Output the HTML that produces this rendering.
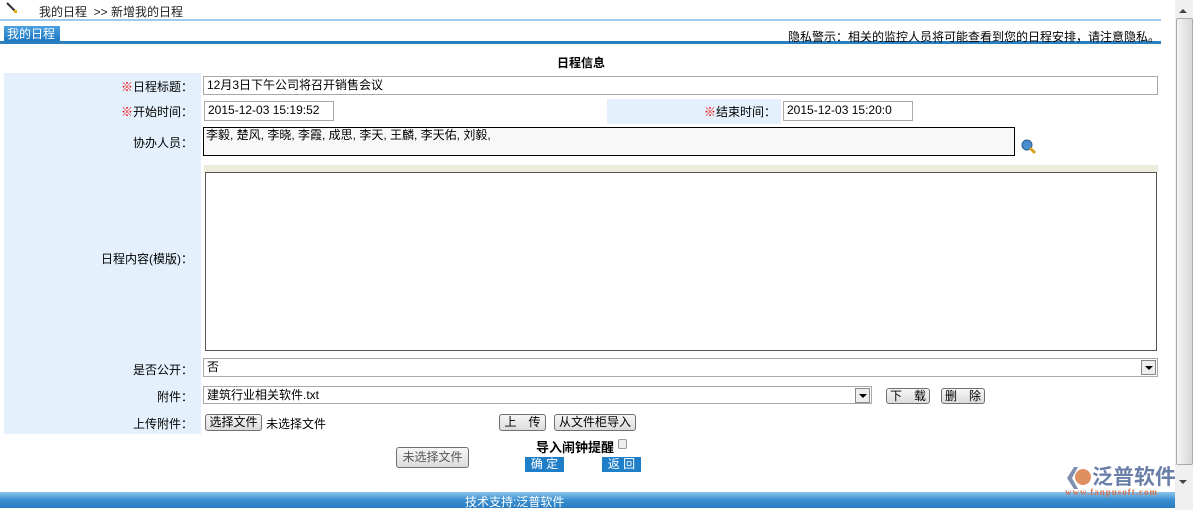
<!DOCTYPE html>
<html><head><meta charset="utf-8"><style>
body{margin:0;width:1193px;height:510px;position:relative;overflow:hidden;background:#fff;font-family:"Liberation Sans","Noto Sans CJK SC",sans-serif;font-size:12px;color:#000}
.a{position:absolute;white-space:nowrap}
.inp{position:absolute;border:1px solid #a9a9a9;background:#fff;box-sizing:border-box;padding:1px 3px;line-height:15px}
.btn{position:absolute;border:1px solid #707070;border-radius:3px;background:linear-gradient(#f6f6f6,#dcdcdc);box-sizing:border-box;text-align:center;line-height:14px;font-size:12px}
.lbl{position:absolute;right:1000px;text-align:right;white-space:nowrap}
.r{color:#e00}
.dd{position:absolute;width:15px;height:15px;border:1px solid #888;box-sizing:border-box;background:#eee}
.dd:after{content:"";position:absolute;left:3px;top:5px;border:4px solid transparent;border-top:4px solid #000}
.bb{position:absolute;background:#1e7ec8;color:#fff;text-align:center;line-height:15px;height:15px}
</style></head><body>
<div class="a" style="left:6px;top:2px;width:10px;height:10px;"><svg width="12" height="12"><path d="M1 1 L9 9" stroke="#333" stroke-width="2"/><rect x="8" y="8" width="3" height="3" fill="#e8b000"/></svg></div>
<div class="a" style="left:39px;top:3px;color:#222">我的日程 &nbsp;&gt;&gt; 新增我的日程</div>
<div class="a" style="left:0;top:19px;width:1161px;height:2px;background:#9fcaed"></div>
<div class="a" style="left:4px;top:26px;width:56px;height:16px;background:linear-gradient(#4aa0e0,#1a74c0);color:#fff;line-height:16px;padding-left:3px;box-sizing:border-box">我的日程</div>
<div class="a" style="left:0;top:41px;width:1161px;height:3px;background:#2a7fc0"></div>
<div class="a" style="left:788px;top:28px">隐私警示：相关的监控人员将可能查看到您的日程安排，请注意隐私。</div>
<div class="a" style="left:557px;top:54px;font-weight:bold">日程信息</div>
<div class="a" style="left:4px;top:73px;width:197px;height:361px;background:#e4f1fc"></div>
<div class="a" style="left:607px;top:99px;width:174px;height:25px;background:#e4f1fc"></div>
<div class="lbl" style="top:78px;right:1000px"><span class="r">※</span>日程标题：</div>
<div class="inp" style="left:203px;top:76px;width:955px;height:19px">12月3日下午公司将召开销售会议</div>
<div class="lbl" style="top:103px"><span class="r">※</span>开始时间：</div>
<div class="inp" style="left:204px;top:101px;width:130px;height:20px">2015-12-03 15:19:52</div>
<div class="a" style="left:704px;top:103px"><span class="r">※</span>结束时间：</div>
<div class="inp" style="left:783px;top:101px;width:130px;height:20px">2015-12-03 15:20:0</div>
<div class="lbl" style="top:134px">协办人员：</div>
<div class="inp" style="left:203px;top:127px;width:812px;height:29px;border:1px solid #000;background:#f8f8f8;padding:0 2px">李毅, 楚风, 李晓, 李霞, 成思, 李天, 王麟, 李天佑, 刘毅,</div>
<div class="a" style="left:1021px;top:139px"><svg width="16" height="16"><circle cx="6" cy="6" r="5" fill="#4a8ed0" stroke="#2a5e90"/><path d="M9 9 L14 14" stroke="#d8a020" stroke-width="3"/></svg></div>
<div class="a" style="left:204px;top:165px;width:954px;height:7px;background:#ecebdc"></div>
<div class="a" style="left:205px;top:172px;width:952px;height:179px;border:1px solid #555;box-sizing:border-box"></div>
<div class="lbl" style="top:250px">日程内容(模版)：</div>
<div class="lbl" style="top:361px">是否公开：</div>
<div class="inp" style="left:203px;top:358px;width:955px;height:19px">否</div>
<div class="dd" style="left:1141px;top:360px"></div>
<div class="lbl" style="top:388px">附件：</div>
<div class="inp" style="left:203px;top:386px;width:669px;height:18px">建筑行业相关软件.txt</div>
<div class="dd" style="left:855px;top:388px"></div>
<div class="btn" style="left:886px;top:388px;width:44px;height:16px">下　载</div>
<div class="btn" style="left:941px;top:388px;width:44px;height:16px">删　除</div>
<div class="lbl" style="top:415px">上传附件：</div>
<div class="btn" style="left:205px;top:414px;width:57px;height:17px">选择文件</div>
<div class="a" style="left:266px;top:415px">未选择文件</div>
<div class="btn" style="left:499px;top:414px;width:47px;height:17px">上　传</div>
<div class="btn" style="left:554px;top:414px;width:82px;height:17px">从文件柜导入</div>
<div class="a" style="left:536px;top:437px;font-weight:bold;font-size:13px">导入闹钟提醒</div>
<div class="a" style="left:618px;top:439px;width:7px;height:8px;border:1px solid #999;border-radius:2px;background:#eee"></div>
<div class="btn" style="left:396px;top:447px;width:73px;height:21px;line-height:19px;color:#555">未选择文件</div>
<div class="bb" style="left:525px;top:457px;width:39px">确 定</div>
<div class="bb" style="left:602px;top:457px;width:39px">返 回</div>
<div class="a" style="left:0;top:492px;width:1175px;height:16px;background:linear-gradient(#8cc4ec,#3a8fd0 50%,#2a7cc0)"></div>
<div class="a" style="left:465px;top:493px;color:#fff">技术支持:泛普软件</div>
<div class="a" style="left:1064px;top:465px"><svg width="30" height="26"><path d="M10 2 L3 13 L10 24 L14 24 L8 13 L14 2Z" fill="#8090b0"/><circle cx="19" cy="12" r="8" fill="#e09060"/></svg></div>
<div class="a" style="left:1092px;top:461px;font-size:21px;color:#6a7fa8;font-weight:bold">泛普软件</div>
<div class="a" style="left:1065px;top:487px;font-size:9px;color:#d07050;font-family:'Liberation Serif',serif;font-weight:bold;letter-spacing:1px">www.fanpusoft.com</div>
<div class="a" style="left:1175px;top:0;width:18px;height:510px;background:#f0f0f0"></div>
<div class="a" style="left:1176px;top:18px;width:15px;height:445px;background:linear-gradient(90deg,#f4f4f4,#d8d8d8);border:1px solid #aaa;border-radius:2px"></div>
<div class="a" style="left:1179px;top:5px;border:4px solid transparent;border-bottom:4px solid #444"></div>
<div class="a" style="left:1179px;top:480px;border:4px solid transparent;border-top:4px solid #444"></div>
</body></html>
